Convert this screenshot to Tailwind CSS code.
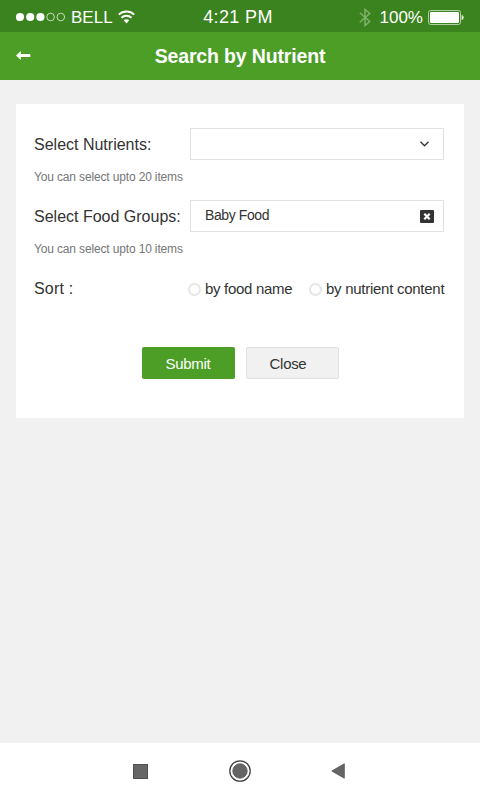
<!DOCTYPE html>
<html lang="en">
<head>
  <meta charset="UTF-8">
  <meta name="viewport" content="width=device-width, initial-scale=1.0">
  <title>Search by Nutrient</title>
  <script src="https://cdn.jsdelivr.net/npm/@tailwindcss/browser@4"></script>
</head>
<body class="bg-[#f1f1f1] font-['Liberation_Sans',sans-serif] text-[#333]">
  <div class="flex flex-col w-[480px] h-[800px] overflow-hidden">
    <!-- Status bar -->
    <div class="grid grid-cols-3 items-center h-8 px-4 pt-0.5 bg-[#3b831e] text-white shrink-0">
      <div class="flex items-center">
        <svg class="w-[50px] h-[10px] shrink-0" viewBox="0 0 50 10" fill="#fff">
          <circle cx="4" cy="5" r="4.1"/>
          <circle cx="14.2" cy="5" r="4.1"/>
          <circle cx="24.4" cy="5" r="4.1"/>
          <circle cx="34.6" cy="5" r="3.8" fill="none" stroke="#d3e6cb" stroke-width="0.9"/>
          <circle cx="44.8" cy="5" r="3.8" fill="none" stroke="#d3e6cb" stroke-width="0.9"/>
        </svg>
        <span class="ml-[5px] pt-0.5 text-[17px] leading-5 whitespace-nowrap">BELL</span>
        <svg class="ml-[5px] mb-px w-[17px] h-[14px] shrink-0" viewBox="0 0 17 14" fill="none" stroke="#fff" stroke-width="2">
          <path d="M0.8 4.6C5 0.4 12 0.4 16.2 4.6"/>
          <path d="M3.5 7.8C6.3 5.1 10.7 5.1 13.5 7.8"/>
          <path d="M5.7 10.3C7.2 8.8 9.8 8.8 11.3 10.3L8.5 13.4Z" fill="#fff" stroke="none"/>
        </svg>
      </div>
      <span class="pr-1 text-center text-lg leading-5 tracking-[0.35px] whitespace-nowrap">4:21 PM</span>
      <div class="flex items-center justify-end">
        <svg class="w-3 h-[19px]" viewBox="0 0 12 19" fill="none" stroke="#80b36c" stroke-width="1.4">
          <path d="M0.8 4.8L10.8 13.5L6 17.6V1.4L10.8 5.5L0.8 14.2"/>
        </svg>
        <span class="ml-[9px] pt-0.5 text-[17px] leading-5 whitespace-nowrap">100%</span>
        <svg class="ml-[5px] w-9 h-[15px]" viewBox="0 0 36 15">
          <rect x="0.5" y="0.5" width="32" height="14" rx="2" fill="none" stroke="#b0d0a3"/>
          <rect x="2" y="2" width="29" height="11" rx="1" fill="#fff"/>
          <path d="M33.6 5C36.4 5.6 36.4 9.4 33.6 10Z" fill="#e2f0dc"/>
        </svg>
      </div>
    </div>

    <!-- Header -->
    <header class="grid grid-cols-[32px_1fr_32px] items-center h-12 px-4 pb-px bg-[#4c9e26] text-white shrink-0">
      <svg class="w-[15px] h-[9px]" viewBox="0 0 15 9" fill="#fff">
        <path d="M0 4.5L4.8 0V2.9H14.3V6.1H4.8V9Z"/>
      </svg>
      <h1 class="text-center text-[19.5px] leading-6 font-bold tracking-[-0.15px] whitespace-nowrap">Search by Nutrient</h1>
    </header>

    <!-- Search form -->
    <main class="grow pt-6 px-4">
      <form class="flex flex-col h-[314px] pt-6 pl-[18px] pr-5 bg-white">
        <div class="flex h-8">
          <label class="w-[156px] text-base leading-[34px] whitespace-nowrap">Select Nutrients:</label>
          <div class="flex grow items-center justify-end pr-3.5 border border-[#e1e1e1]">
            <svg class="w-[9px] h-[6px]" viewBox="0 0 9 6" fill="none" stroke="#333" stroke-width="1.3">
              <path d="M0.5 0.7L4.5 4.8L8.5 0.7"/>
            </svg>
          </div>
        </div>
        <p class="h-10 pt-[9px] text-xs leading-4 tracking-[-0.15px] text-[#777]">You can select upto 20 items</p>
        <div class="flex h-8">
          <label class="w-[156px] text-base leading-[34px] whitespace-nowrap">Select Food Groups:</label>
          <div class="flex grow items-center justify-between pl-3.5 pr-[9px] border border-[#e1e1e1]">
            <span class="pb-0.5 text-sm leading-7 tracking-[-0.4px]">Baby Food</span>
            <svg class="w-[14px] h-[13px]" viewBox="0 0 14 13">
              <rect width="14" height="13" rx="1" fill="#333"/>
              <path d="M4.3 3.8L9.7 9.2M9.7 3.8L4.3 9.2" stroke="#fff" stroke-width="2.2"/>
            </svg>
          </div>
        </div>
        <p class="h-10 pt-[9px] text-xs leading-4 tracking-[-0.15px] text-[#777]">You can select upto 10 items</p>
        <div class="flex h-8 items-center">
          <span class="w-[154px] pt-0.5 text-base leading-8 tracking-[0.2px]">Sort :</span>
          <span class="size-[13px] mt-0.5 rounded-full border-2 border-[#e6e6e6]"></span>
          <span class="ml-1 mt-0.5 w-[104px] text-[15px] leading-8 tracking-[-0.3px] whitespace-nowrap">by food name</span>
          <span class="size-[13px] mt-0.5 rounded-full border-2 border-[#e6e6e6]"></span>
          <span class="ml-1 mt-0.5 w-[118px] text-[15px] leading-8 tracking-[-0.27px] whitespace-nowrap">by nutrient content</span>
        </div>
        <div class="flex justify-center gap-[11px] mt-[43px] pl-0.5">
          <button type="button" class="w-[93px] h-8 pt-0.5 rounded-[2px] bg-[#4c9e26] text-[15px] tracking-[-0.3px] text-white">Submit</button>
          <button type="button" class="w-[93px] h-8 pt-0.5 pr-2 rounded-[2px] border border-[#e1e1e1] bg-[#f1f1f1] text-[15px] tracking-[-0.3px]">Close</button>
        </div>
      </form>
    </main>

    <!-- Bottom navigation -->
    <nav class="flex items-center h-[57px] pl-[133px] pb-px bg-white shrink-0">
      <svg class="w-[15px] h-[15px]" viewBox="0 0 15 15">
        <rect x="0.5" y="0.5" width="14" height="14" fill="#666" stroke="#505050"/>
      </svg>
      <svg class="ml-[81px] w-[22px] h-[22px]" viewBox="0 0 22 22">
        <circle cx="11" cy="11" r="10.2" fill="none" stroke="#444" stroke-width="1.3"/>
        <circle cx="11" cy="11" r="7.2" fill="#666" stroke="#505050" stroke-width="0.8"/>
      </svg>
      <svg class="ml-20 w-[14px] h-[16px]" viewBox="0 0 14 16">
        <path d="M0.8 8L13.3 0.8V15.2Z" fill="#666" stroke="#505050" stroke-width="0.8"/>
      </svg>
    </nav>
  </div>
</body>
</html>
